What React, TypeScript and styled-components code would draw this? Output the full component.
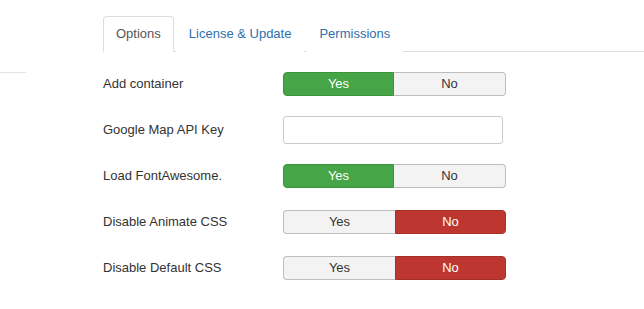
import React from "react";
import styled, { createGlobalStyle } from "styled-components";

const GlobalStyle = createGlobalStyle`
  html, body { margin: 0; padding: 0; background: #fff; }
  body {
    font-family: "Liberation Sans", Arial, Helvetica, sans-serif;
    font-size: 13px;
    color: #333;
  }
`;

const Page = styled.div`
  display: flex;
  width: 644px;
  height: 309px;
  overflow: hidden;
`;

const Sidebar = styled.div`
  flex: 0 0 26px;
  height: 72px;
  border-bottom: 1px solid #e3e3e3;
`;

const Main = styled.div`
  flex: 1;
  padding: 16px 0 0 77px;
`;

const TabBar = styled.ul`
  display: flex;
  margin: 0;
  padding: 0;
  list-style: none;
  border-bottom: 1px solid #ddd;
`;

const Tab = styled.li<{ $active?: boolean }>`
  margin: 0 2px -1px 0;
  padding: 8px 12px;
  line-height: 18px;
  border: 1px solid ${(p) => (p.$active ? "#ddd" : "transparent")};
  border-bottom-color: ${(p) => (p.$active ? "#fff" : "transparent")};
  border-radius: 4px 4px 0 0;
  background: #fff;
  color: ${(p) => (p.$active ? "#555" : "#2f6fad")};
  cursor: pointer;
`;

const Form = styled.div`
  padding-top: 20px;
`;

const ControlGroup = styled.div`
  display: flex;
  align-items: center;
  margin-bottom: 22px;
  &:nth-child(-n + 2) {
    margin-bottom: 20px;
  }
`;

const Label = styled.label`
  flex: 0 0 180px;
  color: #333;
  line-height: 18px;
`;

const TextInput = styled.input`
  box-sizing: border-box;
  width: 220px;
  height: 28px;
  margin: 0;
  padding: 4px 6px;
  border: 1px solid #ccc;
  border-radius: 3px;
  font: inherit;
  background: #fff;
`;

const ToggleGroup = styled.div`
  display: flex;
  width: 223px;
`;

const ToggleButton = styled.button<{ $state: "off" | "yes" | "no" }>`
  box-sizing: border-box;
  flex: 0 0 ${(p) => (p.$state === "off" ? "112px" : "111px")};
  height: 24px;
  margin: 0;
  padding: 0;
  font: inherit;
  font-size: 13px;
  line-height: 22px;
  text-align: center;
  cursor: pointer;
  color: ${(p) => (p.$state === "off" ? "#333" : "#fff")};
  background: ${(p) =>
    p.$state === "yes" ? "#46a546" : p.$state === "no" ? "#bd362f" : "#f3f3f3"};
  border: 1px solid
    ${(p) =>
      p.$state === "yes" ? "#3c933c" : p.$state === "no" ? "#a52f29" : "#bdbdbd"};
  &:first-child {
    border-radius: 4px 0 0 4px;
    border-right-width: ${(p) => (p.$state === "off" ? "0" : "1px")};
  }
  &:last-child {
    border-radius: 0 4px 4px 0;
    border-left-width: ${(p) => (p.$state === "off" ? "0" : "1px")};
  }
`;

type Field =
  | { kind: "toggle"; label: string; value: boolean }
  | { kind: "text"; label: string };

const fields: Field[] = [
  { kind: "toggle", label: "Add container", value: true },
  { kind: "text", label: "Google Map API Key" },
  { kind: "toggle", label: "Load FontAwesome.", value: true },
  { kind: "toggle", label: "Disable Animate CSS", value: false },
  { kind: "toggle", label: "Disable Default CSS", value: false },
];

function Toggle({ value }: { value: boolean }) {
  return (
    <ToggleGroup>
      <ToggleButton $state={value ? "yes" : "off"}>Yes</ToggleButton>
      <ToggleButton $state={value ? "off" : "no"}>No</ToggleButton>
    </ToggleGroup>
  );
}

export default function App() {
  return (
    <>
      <GlobalStyle />
      <Page>
        <Sidebar />
        <Main>
          <TabBar>
            <Tab $active>Options</Tab>
            <Tab>License &amp; Update</Tab>
            <Tab>Permissions</Tab>
          </TabBar>
          <Form>
            {fields.map((f) => (
              <ControlGroup key={f.label}>
                <Label>{f.label}</Label>
                {f.kind === "toggle" ? <Toggle value={f.value} /> : <TextInput type="text" />}
              </ControlGroup>
            ))}
          </Form>
        </Main>
      </Page>
    </>
  );
}
